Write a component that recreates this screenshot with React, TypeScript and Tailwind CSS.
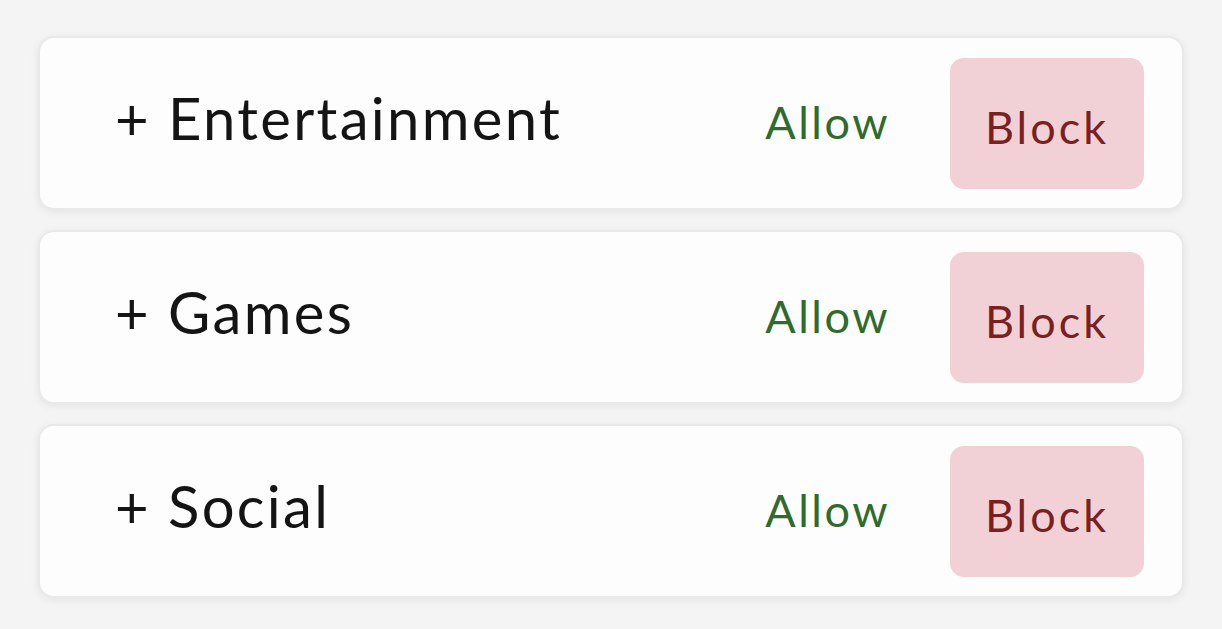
const categories = ['Entertainment', 'Games', 'Social'];

function CategoryRow({ name }: { name: string }) {
  return (
    <div className="h-[174px] flex items-center rounded-[16px] bg-[#fdfdfd] border-2 border-[#e9e9e9] shadow-[0_2px_8px_rgba(0,0,0,0.07)] pl-[75px] pr-[38px]">
      <span className="text-[58px] text-[#141414] leading-none tracking-[2.3px] pb-[10px]">+ {name}</span>
      <div className="ml-auto flex items-center gap-[62px]">
        <button className="text-[45px] leading-none text-[#2f6b2a] tracking-[2.5px] pb-[2px] -mr-[2px]">Allow</button>
        <button className="w-[194px] h-[131px] rounded-[14px] bg-[#f1d1d5] text-[45px] leading-none text-[#7b1f1f] tracking-[3px] pt-[8px]">
          Block
        </button>
      </div>
    </div>
  );
}

function App() {
  return (
    <div
      className="w-[1222px] h-[629px] bg-[#f4f4f4] px-[38px] pt-[36px] flex flex-col gap-[20px]"
      style={{ fontFamily: 'Lato, "Open Sans", sans-serif' }}
    >
      {categories.map((c) => (
        <CategoryRow key={c} name={c} />
      ))}
    </div>
  );
}

export default App;
